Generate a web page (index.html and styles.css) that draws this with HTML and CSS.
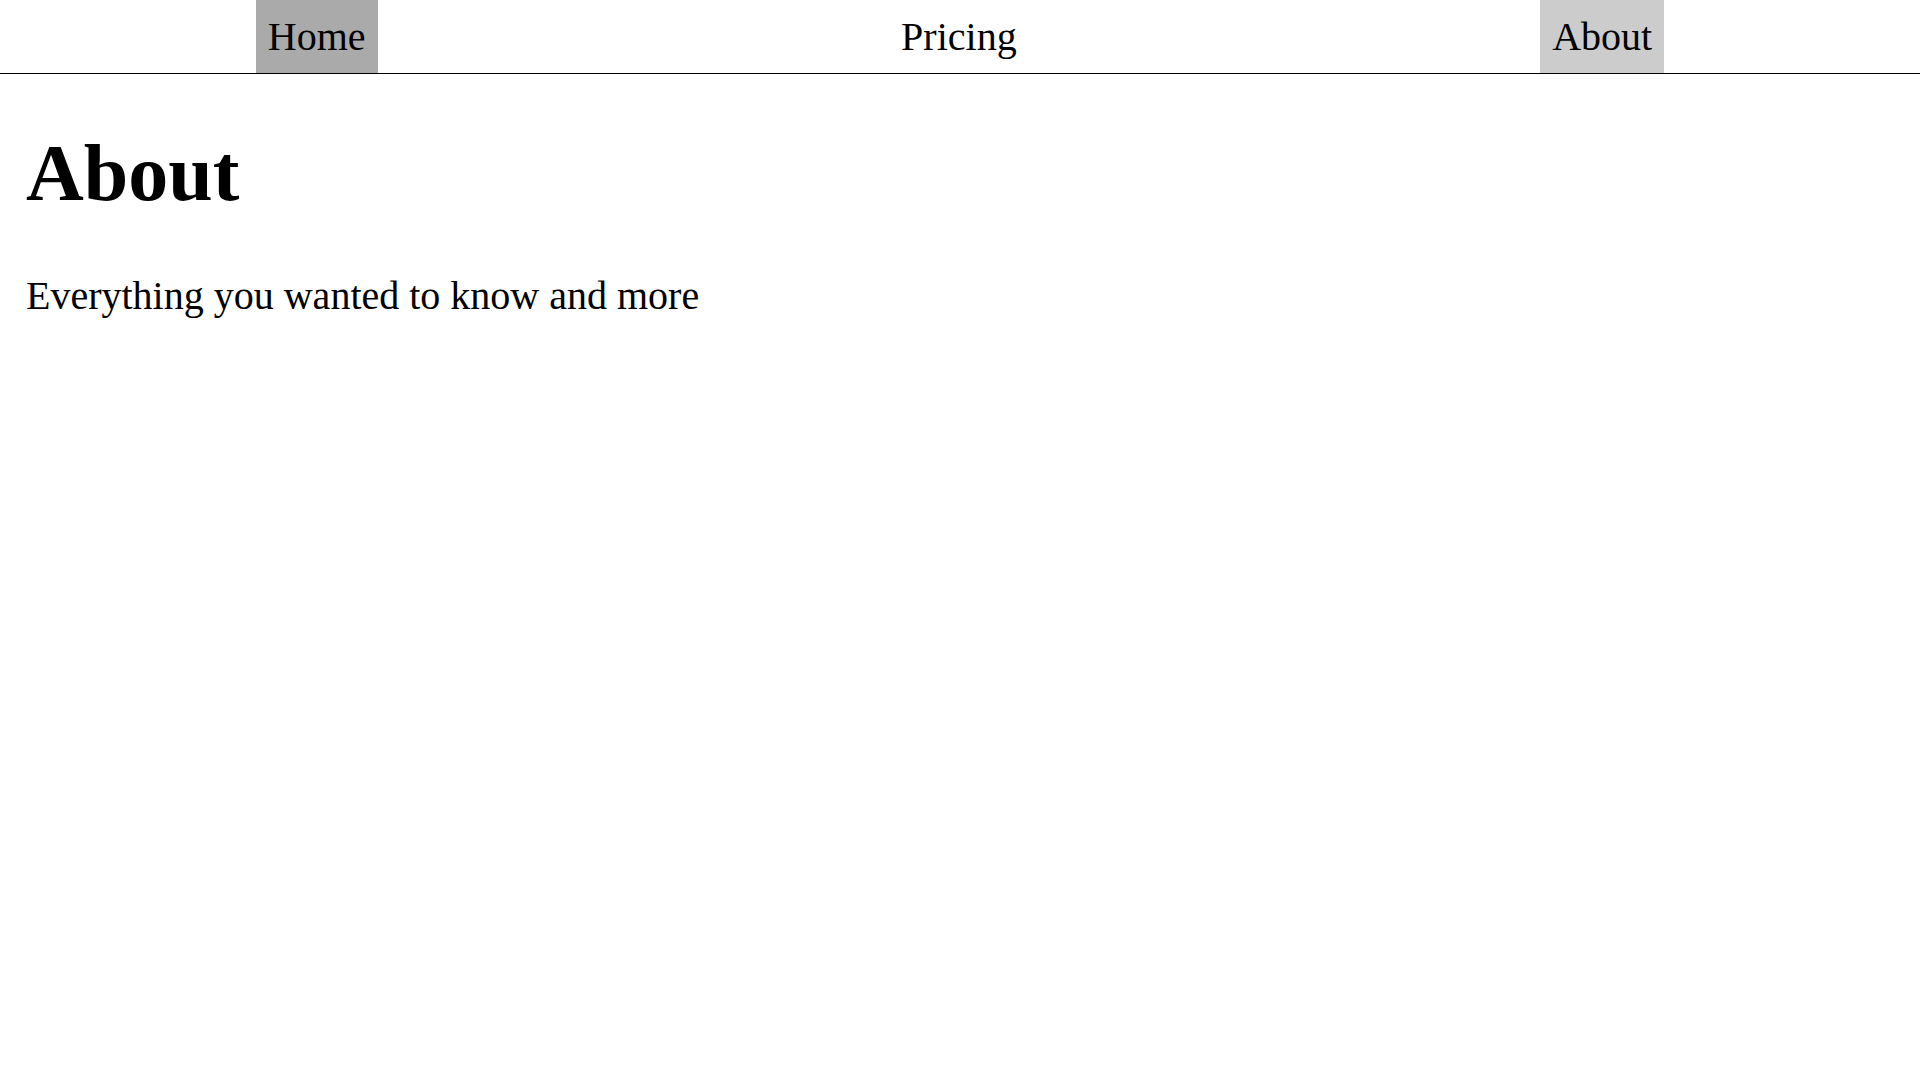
FILE: index.html
```html
<!DOCTYPE html>
<html>
<head>
<meta charset="utf-8">
<link rel="stylesheet" href="styles.css">
</head>
<body>
<nav class="nav">
  <a class="nav-item nav-home" href="#">Home</a>
  <a class="nav-item" href="#">Pricing</a>
  <a class="nav-item nav-active" href="#">About</a>
</nav>
<main class="content">
  <h1 class="title">About</h1>
  <p class="lead">Everything you wanted to know and more</p>
</main>
</body>
</html>
```
FILE: styles.css
```css
html, body {
  margin: 0;
  padding: 0;
  background: #fff;
}
body {
  font-family: "Liberation Serif", "Times New Roman", serif;
  font-size: 40px;
  color: #000;
}
.nav {
  display: flex;
  justify-content: space-around;
  border-bottom: 1px solid #000;
}
.nav-item {
  display: block;
  padding: 13px 12px;
  color: #000;
  text-decoration: none;
}
.nav-home {
  background: #aaa;
}
.nav-active {
  background: #ccc;
}
.content {
  padding: 0 26px;
}
.title {
  font-size: 80px;
  margin: 0.67em 0;
}
.lead {
  margin: 1em 0;
}
```
